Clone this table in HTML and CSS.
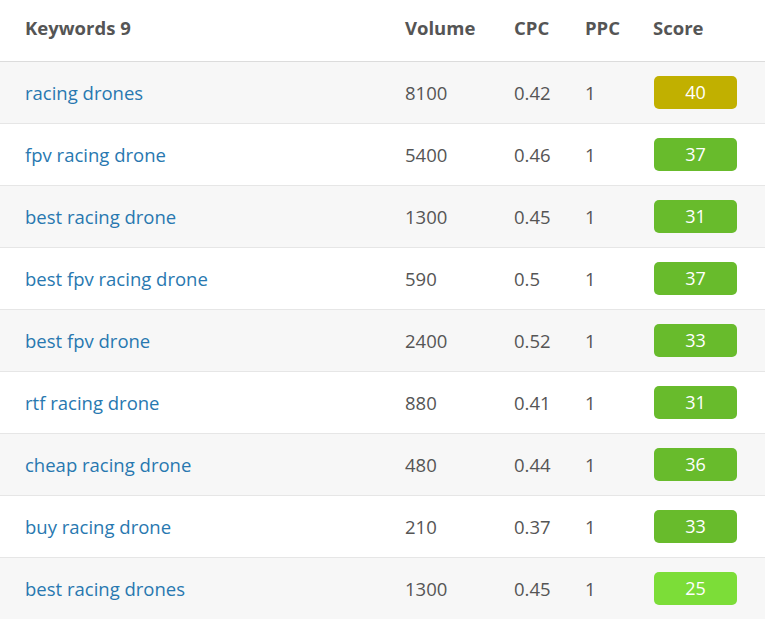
FILE: index.html
```html
<!DOCTYPE html>
<html>
<head>
<meta charset="utf-8">
<link rel="stylesheet" href="styles.css">
</head>
<body>
<table class="kw">
  <colgroup>
    <col class="c-kw"><col class="c-vol"><col class="c-cpc"><col class="c-ppc"><col class="c-score">
  </colgroup>
  <thead>
    <tr><th class="first">Keywords 9</th><th>Volume</th><th>CPC</th><th>PPC</th><th>Score</th></tr>
  </thead>
  <tbody>
    <tr><td class="first"><a>racing drones</a></td><td>8100</td><td>0.42</td><td>1</td><td><span class="badge olive">40</span></td></tr>
    <tr><td class="first"><a>fpv racing drone</a></td><td>5400</td><td>0.46</td><td>1</td><td><span class="badge green">37</span></td></tr>
    <tr><td class="first"><a>best racing drone</a></td><td>1300</td><td>0.45</td><td>1</td><td><span class="badge green">31</span></td></tr>
    <tr><td class="first"><a>best fpv racing drone</a></td><td>590</td><td>0.5</td><td>1</td><td><span class="badge green">37</span></td></tr>
    <tr><td class="first"><a>best fpv drone</a></td><td>2400</td><td>0.52</td><td>1</td><td><span class="badge green">33</span></td></tr>
    <tr><td class="first"><a>rtf racing drone</a></td><td>880</td><td>0.41</td><td>1</td><td><span class="badge green">31</span></td></tr>
    <tr><td class="first"><a>cheap racing drone</a></td><td>480</td><td>0.44</td><td>1</td><td><span class="badge green">36</span></td></tr>
    <tr><td class="first"><a>buy racing drone</a></td><td>210</td><td>0.37</td><td>1</td><td><span class="badge green">33</span></td></tr>
    <tr><td class="first"><a>best racing drones</a></td><td>1300</td><td>0.45</td><td>1</td><td><span class="badge light">25</span></td></tr>
  </tbody>
</table>
</body>
</html>
```
FILE: styles.css
```css
html, body {
  margin: 0;
  padding: 0;
  background: #fff;
}
body {
  font-family: "Open Sans", "Noto Sans", sans-serif;
  font-size: 18.5px;
  color: #555;
}
.kw {
  width: 765px;
  table-layout: fixed;
  border-collapse: collapse;
}
.c-kw { width: 405px; }
.c-vol { width: 109px; }
.c-cpc { width: 71px; }
.c-ppc { width: 68px; }
.c-score { width: 112px; }
.kw th {
  height: 61px;
  text-align: left;
  font-weight: 700;
  color: #555;
  padding: 0 0 6px 0;
  border-bottom: 1px solid #dcdcdc;
  box-sizing: border-box;
}
.kw td {
  height: 61px;
  padding: 0;
  border-bottom: 1px solid #e6e6e6;
  color: #555;
}
.kw .first {
  padding-left: 25px;
}
.kw tbody tr:nth-child(odd) td {
  background: #f7f7f7;
}
.kw tbody tr:last-child td {
  border-bottom: none;
}
.kw a {
  color: #2878b0;
  text-decoration: none;
}
.badge {
  display: flex;
  align-items: center;
  justify-content: center;
  width: 83px;
  height: 33px;
  margin-left: 1px;
  border-radius: 5px;
  color: #fff;
  font-size: 18px;
}
.olive { background: #c1b000; }
.green { background: #68bb2c; }
.light { background: #7cdd38; }
```
